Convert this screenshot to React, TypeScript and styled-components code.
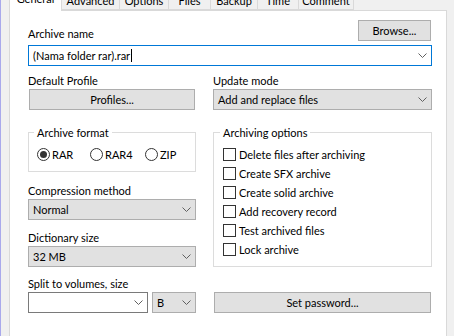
import styled, { createGlobalStyle } from 'styled-components';

const GlobalStyle = createGlobalStyle`
  html, body {
    margin: 0;
    padding: 0;
    background: #f0f0f0;
  }
  body {
    font-family: Lato, "Liberation Sans", sans-serif;
    font-size: 11px;
    color: #000;
  }
`;

const Window = styled.div`
  width: 454px;
  height: 336px;
  box-sizing: border-box;
  overflow: hidden;
  background: #f0f0f0;
  border-left: 1px solid #a9a9ec;
  padding-left: 8px;
`;

const TabStrip = styled.div`
  display: flex;
  align-items: flex-end;
  height: 22px;
  margin-top: -12px;
`;

const Tab = styled.div<{ $width: number; $active?: boolean }>`
  position: relative;
  z-index: ${(p) => (p.$active ? 2 : 1)};
  box-sizing: border-box;
  width: ${(p) => p.$width}px;
  height: ${(p) => (p.$active ? 23 : 20)}px;
  margin-left: ${(p) => (p.$active ? 0 : -1)}px;
  margin-bottom: ${(p) => (p.$active ? -1 : 0)}px;
  display: flex;
  align-items: center;
  justify-content: center;
  padding-bottom: ${(p) => (p.$active ? 3 : 0)}px;
  background: ${(p) => (p.$active ? '#fff' : '#f0f0f0')};
  border: 1px solid #d9d9d9;
  border-bottom: ${(p) => (p.$active ? 'none' : '1px solid #d9d9d9')};
  line-height: 15px;
  white-space: nowrap;
`;

const Panel = styled.div`
  width: 438px;
  min-height: 340px;
  box-sizing: border-box;
  background: #fff;
  border: 1px solid #d9d9d9;
  padding: 9px 14px 0 18px;
`;

const TopRow = styled.div`
  display: flex;
  justify-content: space-between;
  align-items: flex-end;
  height: 21px;
`;

const Label = styled.div`
  line-height: 15px;
  white-space: nowrap;
`;

const Button = styled.button<{ $width?: number }>`
  box-sizing: border-box;
  display: block;
  width: ${(p) => (p.$width ? `${p.$width}px` : 'calc(100% - 2px)')};
  height: 21px;
  margin: 0 1px;
  padding: 0;
  background: #e1e1e1;
  border: 1px solid #adadad;
  border-radius: 0;
  font: inherit;
  color: #000;
  line-height: 15px;
`;

const ComboBox = styled.div<{ $focused?: boolean; $width?: number }>`
  box-sizing: border-box;
  width: ${(p) => (p.$width ? `${p.$width}px` : '100%')};
  height: 21px;
  display: flex;
  align-items: center;
  padding-left: 4px;
  background: #fff;
  border: 1px solid ${(p) => (p.$focused ? '#0078d7' : '#7a7a7a')};
  white-space: nowrap;
`;

const Select = styled.div<{ $width?: number }>`
  box-sizing: border-box;
  width: ${(p) => (p.$width ? `${p.$width}px` : '100%')};
  height: 21px;
  display: flex;
  align-items: center;
  padding-left: 4px;
  background: #e1e1e1;
  border: 1px solid #adadad;
  white-space: nowrap;
`;

const Caret = styled.span`
  display: inline-block;
  width: 1px;
  height: 13px;
  margin-left: 1px;
  background: #000;
`;

const ChevronBox = styled.span`
  margin-left: auto;
  margin-right: 4px;
  display: flex;
  align-items: center;
`;

const Row = styled.div<{ $top: number; $end?: boolean }>`
  display: grid;
  grid-template-columns: 168px 219px;
  column-gap: 17px;
  align-items: ${(p) => (p.$end ? 'end' : 'start')};
  margin-top: ${(p) => p.$top}px;
`;

const Field = styled.div<{ $top?: number }>`
  margin-top: ${(p) => p.$top ?? 0}px;
  & > ${Label} {
    margin-bottom: 1px;
  }
`;

const Group = styled.fieldset<{ $indent: number }>`
  box-sizing: border-box;
  min-width: 0;
  margin: 0;
  border: 1px solid #dcdcdc;
  padding: 5px 0 7px ${(p) => p.$indent}px;
`;

const GroupTitle = styled.legend`
  padding: 0 3px;
  margin-left: -3px;
  line-height: 15px;
`;

const RadioRow = styled.div`
  display: grid;
  grid-template-columns: 53px 55px auto;
  height: 19px;
  align-items: center;
`;

const RadioItem = styled.label`
  display: flex;
  align-items: center;
  gap: 2px;
`;

const RadioDot = styled.span<{ $checked?: boolean }>`
  position: relative;
  box-sizing: border-box;
  width: 13px;
  height: 13px;
  border: 1px solid #333;
  border-radius: 50%;
  background: #fff;
  &::after {
    content: '';
    display: ${(p) => (p.$checked ? 'block' : 'none')};
    position: absolute;
    left: 2px;
    top: 2px;
    width: 7px;
    height: 7px;
    border-radius: 50%;
    background: #333;
  }
`;

const CheckRow = styled.label`
  display: flex;
  align-items: center;
  gap: 3px;
  height: 19px;
`;

const CheckBox = styled.span`
  box-sizing: border-box;
  width: 13px;
  height: 13px;
  border: 1px solid #333;
  background: #fff;
`;

const Stack = styled.div`
  display: flex;
  flex-direction: column;
`;

const SplitRow = styled.div`
  display: flex;
  gap: 4px;
`;

function Chevron() {
  return (
    <ChevronBox>
      <svg width="9" height="5" viewBox="0 0 9 5">
        <polyline points="0.5,0.5 4.5,4.5 8.5,0.5" fill="none" stroke="#606060" strokeWidth="1" />
      </svg>
    </ChevronBox>
  );
}

const tabs = [
  { name: 'General', width: 53 },
  { name: 'Advanced', width: 59 },
  { name: 'Options', width: 50 },
  { name: 'Files', width: 43 },
  { name: 'Backup', width: 48 },
  { name: 'Time', width: 42 },
  { name: 'Comment', width: 56 },
];

const options = [
  'Delete files after archiving',
  'Create SFX archive',
  'Create solid archive',
  'Add recovery record',
  'Test archived files',
  'Lock archive',
];

export default function App() {
  return (
    <Window>
      <GlobalStyle />
      <TabStrip>
        {tabs.map((t, i) => (
          <Tab key={t.name} $width={t.width} $active={i === 0}>
            {t.name}
          </Tab>
        ))}
      </TabStrip>
      <Panel>
        <TopRow>
          <Label>Archive name</Label>
          <Button $width={73}>Browse...</Button>
        </TopRow>
        <Field $top={4}>
          <ComboBox $focused>
            (Nama folder rar).rar
            <Caret />
            <Chevron />
          </ComboBox>
        </Field>

        <Row $top={7}>
          <Field>
            <Label>Default Profile</Label>
            <Button>Profiles...</Button>
          </Field>
          <Field>
            <Label>Update mode</Label>
            <Select>
              Add and replace files
              <Chevron />
            </Select>
          </Field>
        </Row>

        <Row $top={15}>
          <Stack>
            <Group $indent={8}>
              <GroupTitle>Archive format</GroupTitle>
              <RadioRow>
                <RadioItem>
                  <RadioDot $checked />
                  RAR
                </RadioItem>
                <RadioItem>
                  <RadioDot />
                  RAR4
                </RadioItem>
                <RadioItem>
                  <RadioDot />
                  ZIP
                </RadioItem>
              </RadioRow>
            </Group>
            <Field $top={11}>
              <Label>Compression method</Label>
              <Select>
                Normal
                <Chevron />
              </Select>
            </Field>
            <Field $top={10}>
              <Label>Dictionary size</Label>
              <Select>
                32 MB
                <Chevron />
              </Select>
            </Field>
          </Stack>
          <Group $indent={9}>
            <GroupTitle>Archiving options</GroupTitle>
            {options.map((o) => (
              <CheckRow key={o}>
                <CheckBox />
                {o}
              </CheckRow>
            ))}
          </Group>
        </Row>

        <Row $top={9} $end>
          <Field>
            <Label>Split to volumes, size</Label>
            <SplitRow>
              <ComboBox $width={120}>
                <Chevron />
              </ComboBox>
              <Select $width={44}>
                B
                <Chevron />
              </Select>
            </SplitRow>
          </Field>
          <Button>Set password...</Button>
        </Row>
      </Panel>
    </Window>
  );
}
